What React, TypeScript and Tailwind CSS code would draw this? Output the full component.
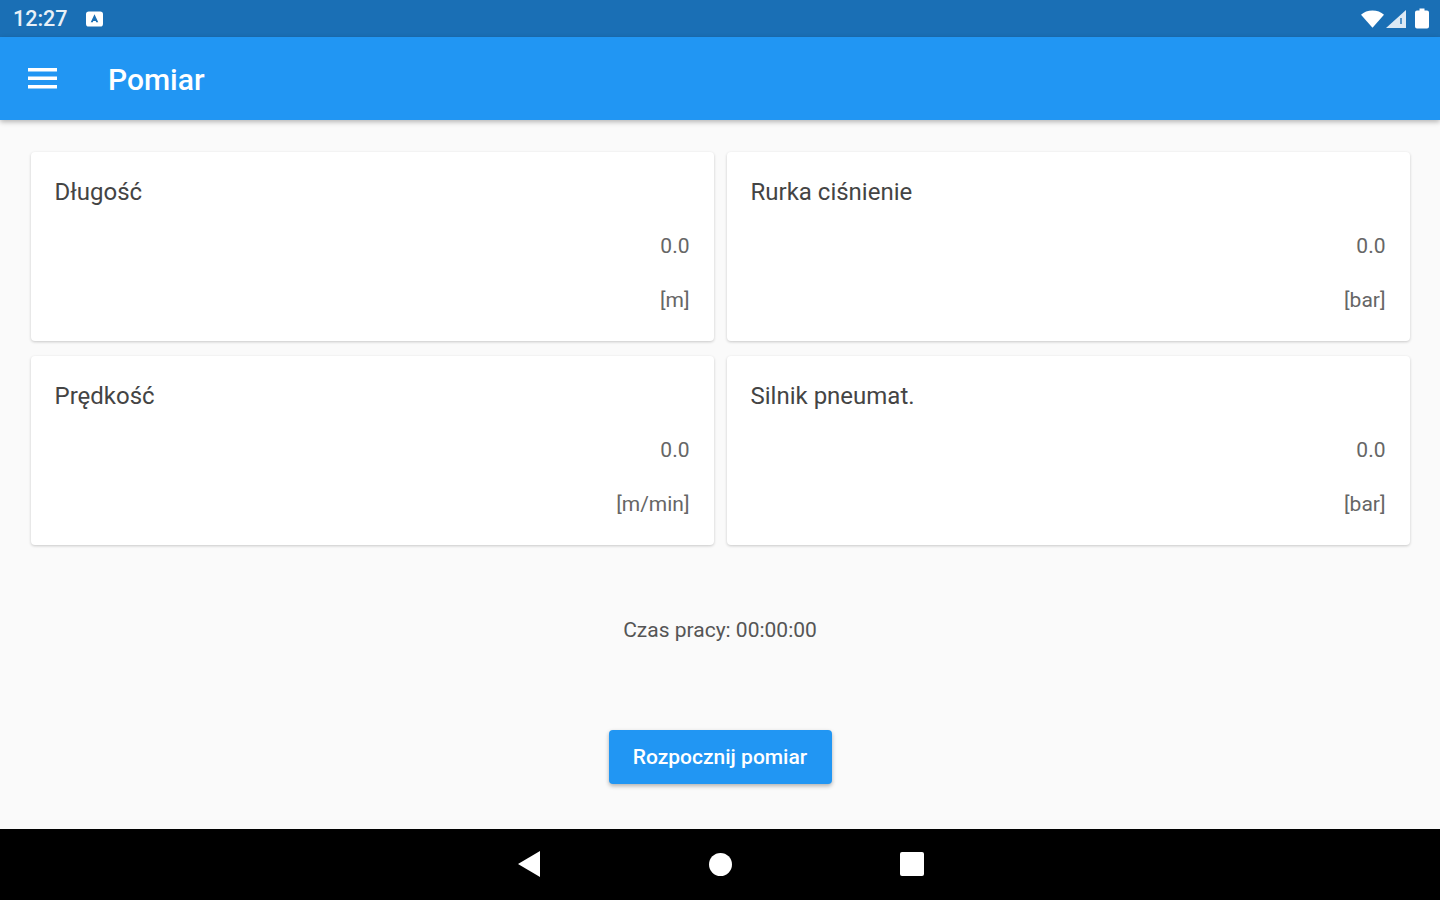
const cards = [
  { title: "Długość", value: "0.0", unit: "[m]" },
  { title: "Rurka ciśnienie", value: "0.0", unit: "[bar]" },
  { title: "Prędkość", value: "0.0", unit: "[m/min]" },
  { title: "Silnik pneumat.", value: "0.0", unit: "[bar]" },
];

function StatusBar() {
  return (
    <div className="h-[37px] bg-[#1a6fb5] flex items-center justify-between pl-[13px] pr-[11px] text-white">
      <div className="flex items-center gap-[18px]">
        <span className="text-[21.5px] leading-none font-medium opacity-90">12:27</span>
        <svg width="17" height="16" viewBox="0 0 18 16">
          <path
            fillRule="evenodd"
            fill="#fff"
            d="M3 0h12a3 3 0 0 1 3 3v10a3 3 0 0 1-3 3H3a3 3 0 0 1-3-3V3a3 3 0 0 1 3-3zM9 3 5 11.500h2.200l.5-1.300h2.600l.5 1.300H13L9 3z"
          />
        </svg>
      </div>
      <div className="flex items-center gap-[2px]">
        <svg width="23" height="18" viewBox="0 0 24 18">
          <path fill="#fff" d="M0 4.500C3 1.600 7.300 0 12 0s9 1.600 12 4.500L12 18z" />
        </svg>
        <svg width="20" height="18" viewBox="0 0 20 18">
          <path fill="#fff" d="M20 0v18H0z" opacity="0.85" />
          <path fill="#1a6fb5" d="M14 8h2v6h-2z" opacity="0.7" />
        </svg>
        <svg width="14" height="21" viewBox="0 0 14 20" className="ml-[7px]">
          <path fill="#fff" d="M4.500 0h5v2H12a2 2 0 0 1 2 2v14a2 2 0 0 1-2 2H2a2 2 0 0 1-2-2V4a2 2 0 0 1 2-2h2.500z" />
        </svg>
      </div>
    </div>
  );
}

function AppBar() {
  return (
    <div className="relative z-10 h-[83px] bg-[#2196f3] flex items-center pl-[28px] shadow-[0_2px_5px_rgba(0,0,0,0.28)]">
      <svg width="29" height="21" viewBox="0 0 29 21">
        <path fill="#fff" d="M0 0h29v3.500H0zM0 8.500h29v3.500H0zM0 17h29v3.500H0z" />
      </svg>
      <span className="ml-[51px] mt-[2px] text-[30px] leading-none font-medium text-white">Pomiar</span>
    </div>
  );
}

function Card({ title, value, unit }: { title: string; value: string; unit: string }) {
  return (
    <div className="h-[189px] bg-white rounded-[4px] px-[24px] pt-[26px] shadow-[0_1px_3px_rgba(0,0,0,0.2)]">
      <div className="text-[24px] leading-[28px] text-[#444]">{title}</div>
      <div className="mt-[28px] text-right text-[21px] leading-[24px] text-[#666]">{value}</div>
      <div className="mt-[30px] text-right text-[21px] leading-[24px] text-[#666]">{unit}</div>
    </div>
  );
}

function NavBar() {
  return (
    <div className="h-[71px] bg-black flex items-center justify-center gap-[168px] pb-[1px]">
      <svg width="24" height="26" viewBox="0 0 24 26">
        <path fill="#fff" d="M23 0v26L1 13z" />
      </svg>
      <div className="w-[23px] h-[23px] rounded-full bg-white" />
      <div className="w-[24px] h-[24px] rounded-[2px] bg-white" />
    </div>
  );
}

export default function App() {
  return (
    <div className="w-[1440px] h-[900px] flex flex-col overflow-hidden bg-[#fafafa] font-['Roboto',sans-serif]">
      <StatusBar />
      <AppBar />
      <div className="flex-1 flex flex-col items-center">
        <div className="w-[1379px] mt-[32px] grid grid-cols-2 gap-x-[13px] gap-y-[15px]">
          {cards.map((c) => (
            <Card key={c.title} {...c} />
          ))}
        </div>
        <div className="mt-[73px] text-[21px] leading-[24px] text-[#555]">Czas pracy: 00:00:00</div>
        <button
          type="button"
          className="mt-[88px] w-[223px] h-[54px] pt-[1px] rounded-[4px] bg-[#2196f3] text-white text-[21px] font-medium shadow-[0_2px_4px_rgba(0,0,0,0.3)]"
        >
          Rozpocznij pomiar
        </button>
      </div>
      <NavBar />
    </div>
  );
}
